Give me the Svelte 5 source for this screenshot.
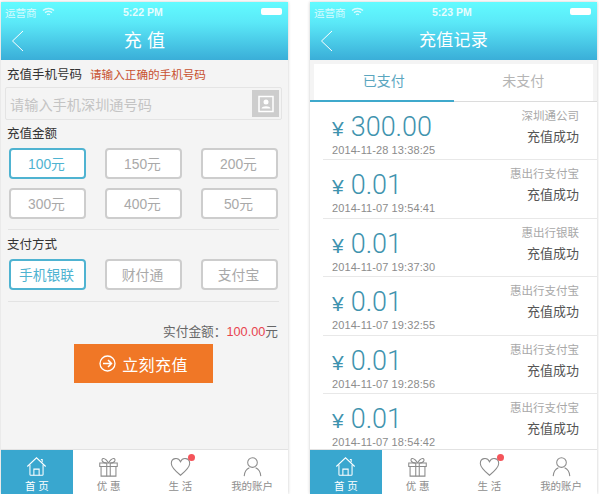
<script>
  const amounts = ["100元", "150元", "200元", "300元", "400元", "50元"];
  const methods = ["手机银联", "财付通", "支付宝"];
  const records = [
    { amount: "300.00", time: "2014-11-28 13:38:25", from: "深圳通公司" },
    { amount: "0.01", time: "2014-11-07 19:54:41", from: "惠出行支付宝" },
    { amount: "0.01", time: "2014-11-07 19:37:30", from: "惠出行银联" },
    { amount: "0.01", time: "2014-11-07 19:32:55", from: "惠出行支付宝" },
    { amount: "0.01", time: "2014-11-07 19:28:56", from: "惠出行支付宝" },
    { amount: "0.01", time: "2014-11-07 18:54:42", from: "惠出行支付宝" }
  ];
  const tabs = [
    { label: "首 页", icon: "home" },
    { label: "优 惠", icon: "gift" },
    { label: "生 活", icon: "heart" },
    { label: "我的账户", icon: "user" }
  ];
</script>

{#snippet statusbar(time)}
  <div class="status">
    <span class="carrier">运营商
      <svg width="13" height="10" viewBox="0 0 13 10" fill="none" stroke="#fff" stroke-width="1.4">
        <path d="M1 3.5 C4 .8 9 .8 12 3.5" />
        <path d="M3 5.6 C5 4 8 4 10 5.6" />
        <path d="M5 7.6 C6 7 7 7 8 7.6" />
      </svg>
    </span>
    <span class="clock">{time}</span>
    <span class="battery"></span>
  </div>
{/snippet}

{#snippet back()}
  <svg class="back" width="13" height="22" viewBox="0 0 13 22" fill="none" stroke="#fff" stroke-width="1">
    <path d="M12 1 L1.5 11 L12 21" />
  </svg>
{/snippet}

{#snippet tabbar()}
  <nav class="tabbar">
    {#each tabs as t, i}
      <div class="tab" class:on={i === 0}>
        <svg width="24" height="24" viewBox="0 0 24 24" fill="none" stroke={i === 0 ? "#fff" : "#8b8b8b"} stroke-width="1.2">
          {#if t.icon === "home"}
            <path d="M1.5 12 L12 2 L22.5 12" />
            <path d="M17 4 L18.5 4 L18.5 7" />
            <path d="M4.5 10 V21 Q4.5 22 5.5 22 H18.5 Q19.5 22 19.5 21 V10" />
            <path d="M9 22 V15 H15 V22" />
          {:else if t.icon === "gift"}
            <path d="M2 8 H22 V12 H2 Z" />
            <path d="M3.5 12 V23 H20.5 V12" />
            <path d="M10 8 V23 M14 8 V23" />
            <path d="M12 8 C8 1 3 2 5 6 Q6 8 10 8 M12 8 C16 1 21 2 19 6 Q18 8 14 8" />
          {:else if t.icon === "heart"}
            <path d="M12 22 C6 17 1.5 13 1.5 8.5 C1.5 2 9.5 1 12 6.5 C14.5 1 22.5 2 22.5 8.5 C22.5 13 18 17 12 22 Z" />
          {:else}
            <circle cx="12" cy="7.5" r="5.5" />
            <path d="M2.5 23 C3 17 6 14.5 8.5 13.5 M21.5 23 C21 17 18 14.5 15.5 13.5" />
          {/if}
        </svg>
        {#if t.icon === "heart"}<span class="dot"></span>{/if}
        <span class="tablabel">{t.label}</span>
      </div>
    {/each}
  </nav>
{/snippet}

<div class="page">
  <section class="phone">
    <header class="top">
      {@render statusbar("5:22 PM")}
      <div class="title">{@render back()}<h1 class="spaced">充 值</h1></div>
    </header>

    <main class="form">
      <div class="label first">充值手机号码<em>请输入正确的手机号码</em></div>
      <div class="phoneinput">
        <span>请输入手机深圳通号码</span>
        <span class="contact">
          <svg width="18" height="18" viewBox="0 0 18 18">
            <rect x="2" y="1.5" width="14" height="15" fill="none" stroke="#fff" stroke-width="1.5" />
            <circle cx="9" cy="7" r="2.5" fill="#fff" />
            <path d="M4.5 13.5 C5 10.5 13 10.5 13.5 13.5 Z" fill="#fff" />
          </svg>
        </span>
      </div>

      <div class="label amount">充值金额</div>
      <div class="grid">
        {#each amounts as a, i}
          <button class="opt" class:sel={i === 0}>{a}</button>
        {/each}
      </div>
      <hr />

      <div class="label pay">支付方式</div>
      <div class="grid">
        {#each methods as m, i}
          <button class="opt" class:sel={i === 0}>{m}</button>
        {/each}
      </div>
      <hr class="last" />

      <div class="total">实付金额：<b>100.00</b>元</div>
      <button class="submit">
        <svg width="17" height="17" viewBox="0 0 17 17" fill="none" stroke="#fff" stroke-width="1.3">
          <circle cx="8.5" cy="8.5" r="7.5" />
          <path d="M4 8.5 H12.5 M9 5 L12.5 8.5 L9 12" stroke-width="1.5" />
        </svg>
        立刻充值
      </button>
    </main>
    {@render tabbar()}
  </section>

  <section class="phone">
    <header class="top">
      {@render statusbar("5:23 PM")}
      <div class="title">{@render back()}<h1>充值记录</h1></div>
    </header>

    <div class="switch">
      <div class="seg active">已支付</div>
      <div class="seg">未支付</div>
    </div>

    <ul class="list">
      {#each records as r}
        <li>
          <div class="left">
            <div class="money"><span class="yen">¥</span>{r.amount}</div>
            <div class="time">{r.time}</div>
          </div>
          <div class="right">
            <div class="from">{r.from}</div>
            <div class="state">充值成功</div>
          </div>
        </li>
      {/each}
    </ul>
    {@render tabbar()}
  </section>
</div>

<style>
  :global(body) {
    margin: 0;
    background: #fff;
  }
  .page {
    width: 599px;
    height: 494px;
    display: flex;
    gap: 22px;
    padding: 2px 0 0 1px;
    box-sizing: border-box;
    overflow: hidden;
    font-family: "Liberation Sans", "Noto Sans CJK SC", sans-serif;
  }
  .phone {
    width: 287px;
    height: 492px;
    display: flex;
    flex-direction: column;
    background: #f4f4f4;
    box-shadow: 0 0 3px rgba(0, 0, 0, 0.22);
  }
  .top {
    height: 58px;
    flex: none;
    background: linear-gradient(#62fbff, #5be9f8 35%, #3aaed8);
    color: #fff;
  }
  .status {
    height: 18px;
    display: flex;
    align-items: center;
    justify-content: space-between;
    padding: 1px 5px 0 4px;
    font-size: 10.5px;
    position: relative;
  }
  .carrier {
    display: flex;
    align-items: center;
    gap: 5px;
    opacity: 0.75;
  }
  .clock {
    position: absolute;
    left: 122px;
    font-weight: bold;
    font-size: 10.5px;
    opacity: 0.85;
  }
  .battery {
    width: 21px;
    height: 7px;
    background: #fff;
    border-radius: 2px;
    margin-right: 1px;
    margin-top: -1px;
  }
  .title {
    height: 40px;
    display: flex;
    align-items: center;
    justify-content: center;
    position: relative;
  }
  .back {
    position: absolute;
    left: 10px;
    top: 9px;
  }
  h1 {
    margin: 0 0 5px;
    font-size: 17px;
    font-weight: normal;
    letter-spacing: 0.2px;
  }
  .spaced {
    font-size: 18px;
  }
  .form {
    flex: 1;
    padding: 0 10px 0 8px;
    min-height: 0;
  }
  .label {
    font-size: 12.5px;
    color: #333;
    line-height: 16px;
    margin: 0 -2px 6px;
    padding-top: 6px;
  }
  .label.first {
    padding-top: 7px;
    margin-bottom: 4px;
  }
  .label.pay {
    padding-top: 7px;
  }
  .label em {
    font-style: normal;
    color: #c8512f;
    font-size: 11.6px;
    margin-left: 8px;
  }
  .phoneinput {
    height: 31px;
    margin: 0 -4px;
    border: 1px solid #e4e4e4;
    border-radius: 2px;
    display: flex;
    align-items: center;
    justify-content: space-between;
    padding: 0 2px 0 4px;
    font-size: 14.2px;
    color: #c4c4c4;
  }
  .contact {
    width: 27px;
    height: 27px;
    background: #cdcdcd;
    display: flex;
    align-items: center;
    justify-content: center;
  }
  .grid {
    display: grid;
    grid-template-columns: repeat(3, 77px);
    justify-content: space-between;
    row-gap: 9px;
  }
  .opt {
    height: 31px;
    padding: 0 2px 1px 0;
    background: #fff;
    border: 2px solid #cdcdcd;
    border-radius: 4px;
    font: inherit;
    font-size: 13.8px;
    color: #a9a9a9;
  }
  .opt.sel {
    border-color: #4fb3d1;
    color: #4fb3d1;
  }
  hr {
    border: 0;
    border-top: 1px solid #e3e3e3;
    margin: 10px -1px 0;
  }
  hr.last {
    margin-top: 11px;
  }
  .total {
    margin-top: 23px;
    text-align: right;
    font-size: 12.7px;
    color: #666;
    line-height: 14px;
  }
  .total b {
    font-weight: normal;
    color: #e8434f;
  }
  .submit {
    display: flex;
    align-items: center;
    justify-content: center;
    gap: 6px;
    width: 139px;
    height: 39px;
    margin: 5px 0 0 65px;
    border: 0;
    background: #f07726;
    color: #fff;
    font: inherit;
    font-size: 16px;
    letter-spacing: 0.4px;
  }
  .switch {
    flex: none;
    height: 42px;
    box-sizing: border-box;
    display: flex;
    background: #f4f4f4;
    padding: 4px 4px 0;
    border-bottom: 1px solid #dcdcdc;
    position: relative;
  }
  .seg {
    flex: 1;
    background: #fff;
    display: flex;
    align-items: center;
    justify-content: center;
    padding-bottom: 6px;
    font-size: 14px;
    color: #b5b5b5;
  }
  .seg.active {
    color: #5ba6bf;
  }
  .seg.active::after {
    content: "";
    position: absolute;
    left: 0;
    bottom: -1px;
    width: 144px;
    height: 2px;
    background: #3fa9cc;
  }
  .list {
    flex: 1;
    min-height: 0;
    overflow: hidden;
    margin: 0;
    padding: 0;
    list-style: none;
    background: #fff;
  }
  li {
    height: 58.4px;
    box-sizing: border-box;
    margin-left: 13px;
    padding: 10px 18px 0 9px;
    border-bottom: 1px solid #e8e8e8;
    display: flex;
    justify-content: space-between;
  }
  .money {
    font-family: Roboto, "Liberation Sans", sans-serif;
    font-weight: 300;
    font-size: 27px;
    line-height: 30px;
    color: #3f93ae;
    white-space: nowrap;
  }
  .yen {
    font-family: "Liberation Sans", sans-serif;
    font-weight: normal;
    font-size: 21px;
    margin-right: 7px;
  }
  .time {
    font-size: 11px;
    color: #8c8c8c;
    line-height: 13px;
    letter-spacing: 0.1px;
  }
  .right {
    text-align: right;
    margin-top: -5px;
  }
  .from {
    font-size: 11.5px;
    color: #a8a8a8;
    line-height: 18px;
  }
  .state {
    font-size: 13px;
    color: #555;
    line-height: 24px;
  }
  .tabbar {
    flex: none;
    height: 44px;
    display: grid;
    grid-template-columns: repeat(4, 1fr);
    background: #fff;
    border-top: 1px solid #e2e2e2;
    position: relative;
  }
  .tab {
    display: flex;
    flex-direction: column;
    align-items: center;
    position: relative;
    padding-top: 6px;
  }
  .tab svg {
    width: 21px;
    height: 21px;
  }
  .tab.on {
    background: #39a7cf;
  }
  .tablabel {
    font-size: 10.5px;
    color: #8e8e8e;
    line-height: 14px;
    margin-top: 2px;
    white-space: nowrap;
  }
  .tab.on .tablabel {
    color: #fff;
  }
  .dot {
    position: absolute;
    left: 43px;
    top: 4px;
    width: 7px;
    height: 7px;
    border-radius: 50%;
    background: #f4545a;
  }
</style>
